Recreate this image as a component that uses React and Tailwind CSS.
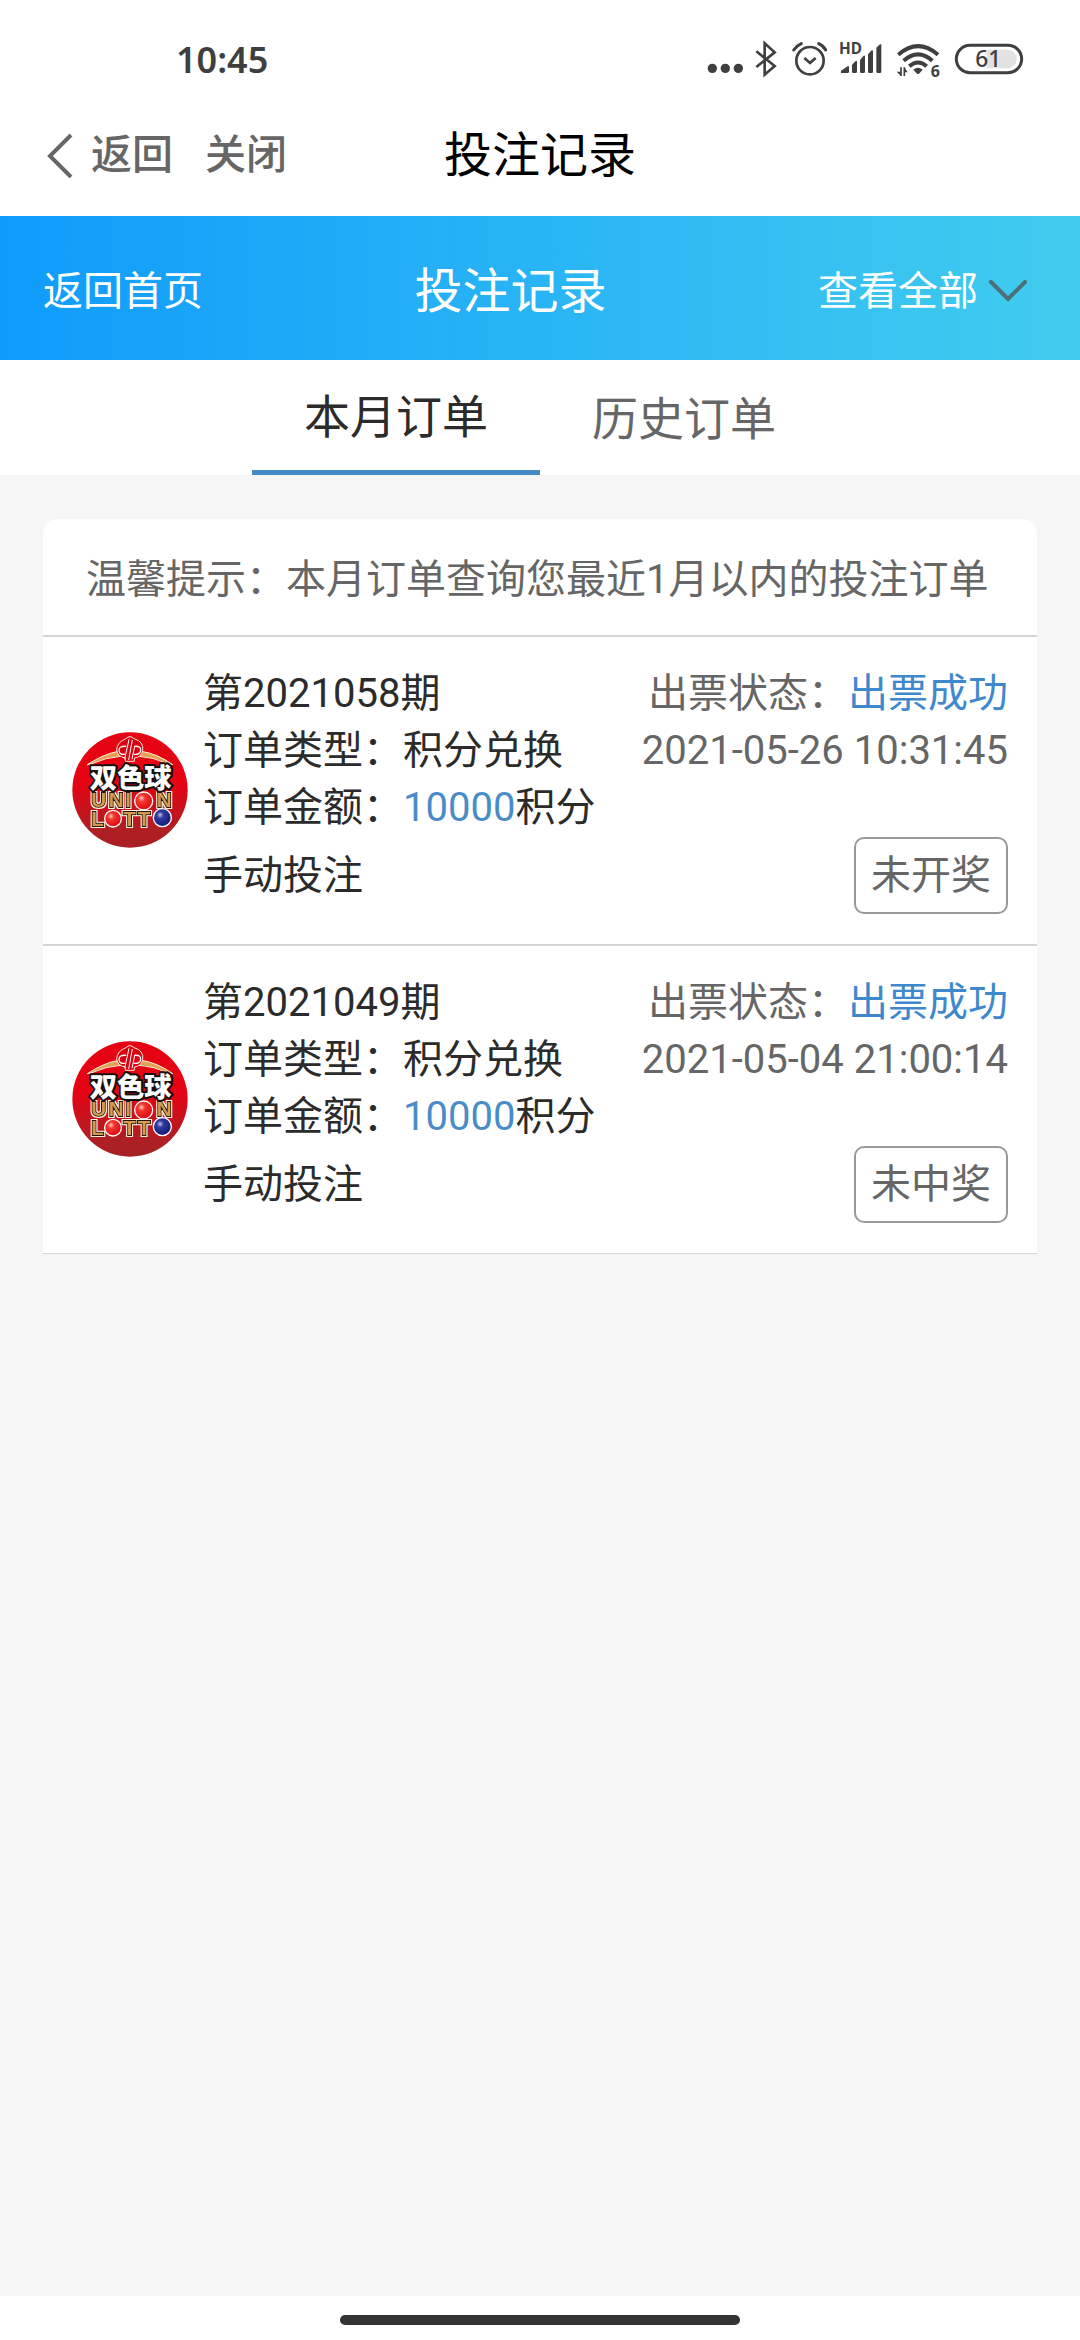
import React from "react";

const orders = [
  { issue: "2021058", type: "积分兑换", amount: "10000", mode: "手动投注", status: "出票成功", time: "2021-05-26 10:31:45", result: "未开奖" },
  { issue: "2021049", type: "积分兑换", amount: "10000", mode: "手动投注", status: "出票成功", time: "2021-05-04 21:00:14", result: "未中奖" },
];

function StatusIcons() {
  return (
    <svg className="h-[60px] w-[350px]" viewBox="0 30 1050 180" fill="none" stroke="#3f3f3f" aria-hidden="true">
      <g fill="#3f3f3f" stroke="none">
        <circle cx="67" cy="145" r="14" />
        <circle cx="106" cy="145" r="14" />
        <circle cx="145" cy="145" r="14" />
      </g>
      <path d="M199 94 L254 138 L224 164 V70 L254 97 L199 141" strokeWidth="8" />
      <circle cx="360" cy="122" r="41" strokeWidth="8" />
      <path d="M343 114 L360 129 L377 114" strokeWidth="8" />
      <path d="M311 90 Q320 77 334 71 M386 71 Q400 77 407 90" strokeWidth="9" strokeLinecap="round" />
      <text x="447" y="102" fontSize="46" fontWeight="700" fontFamily="'Noto Sans', sans-serif" fill="#3f3f3f" stroke="none">HD</text>
      <g fill="#3f3f3f" stroke="none">
        <path d="M453 159 V152 L474 138 Q477 137 477 141 V155 Q477 159 473 159 Z" />
        <path d="M486 155 V134 L497 123 Q501 121 501 126 V155 Q501 159 497 159 H490 Q486 159 486 155 Z" />
        <path d="M510 155 V120 L521 107 Q525 105 525 110 V155 Q525 159 521 159 H514 Q510 159 510 155 Z" />
        <path d="M534 155 V103 L545 91 Q549 89 549 94 V155 Q549 159 545 159 H538 Q534 159 534 155 Z" />
        <path d="M559 155 V83 L570 73 Q574 71 574 76 V155 Q574 159 570 159 H563 Q559 159 559 155 Z" />
      </g>
      <g strokeWidth="12">
        <path d="M625 104 Q684 53 744 104" />
        <path d="M641 122 Q684 84 727 122" />
        <path d="M658 139 Q684 116 710 139" />
      </g>
      <path d="M670 149 Q684 138 698 149 L687 161 Q684 163 681 161 Z" fill="#3f3f3f" stroke="none" />
      <path d="M633 142 V168 M643 142 V168" strokeWidth="5" />
      <path d="M620 155 H633 V168 Z M643 142 L653 157 H643 Z" fill="#3f3f3f" stroke="none" />
      <text x="722" y="170" fontSize="48" fontWeight="700" fontFamily="'Noto Sans', sans-serif" fill="#3f3f3f" stroke="none">6</text>
      <path d="M890 89 H952 A28 28 0 0 1 952 145 H890 Z" fill="#e2e2e2" stroke="none" />
      <rect x="799" y="76" width="196" height="82" rx="41" strokeWidth="9" />
      <text x="856" y="142" fontSize="68" fontWeight="500" fontFamily="'Noto Sans', sans-serif" fill="#3f3f3f" stroke="none">61</text>
    </svg>
  );
}

function LotteryLogo() {
  return (
    <svg className="size-[116px] shrink-0" viewBox="34 36 348 348" role="img" aria-label="双色球">
      <defs>
        <linearGradient id="disc" x1="0" y1="0" x2="0" y2="1">
          <stop offset="0.45" stopColor="#e50314" />
          <stop offset="0.85" stopColor="#ae1f23" />
          <stop offset="1" stopColor="#a82024" />
        </linearGradient>
        <radialGradient id="red" cx="0.38" cy="0.35" r="0.65">
          <stop offset="0" stopColor="#ffc9bd" />
          <stop offset="0.3" stopColor="#f0392f" />
          <stop offset="1" stopColor="#e20613" />
        </radialGradient>
        <radialGradient id="blue" cx="0.38" cy="0.35" r="0.65">
          <stop offset="0" stopColor="#b9bfe8" />
          <stop offset="0.3" stopColor="#2f3a9c" />
          <stop offset="1" stopColor="#141b78" />
        </radialGradient>
        <filter id="outline" x="-10%" y="-10%" width="120%" height="120%">
          <feMorphology in="SourceAlpha" operator="dilate" radius="3" result="grown" />
          <feFlood floodColor="#fff3df" />
          <feComposite in2="grown" operator="in" result="edge" />
          <feMerge>
            <feMergeNode in="edge" />
            <feMergeNode in="SourceGraphic" />
          </feMerge>
        </filter>
      </defs>
      <circle cx="208" cy="210" r="173" fill="url(#disc)" />
      <path d="M80 134 Q130 101 174 94 H242 Q290 101 336 134 L322 131 Q276 111 236 109 H180 Q136 112 94 131 Z" fill="#e6a04f" stroke="#fff0d8" strokeWidth="3" />
      <path d="M196 56 Q208 44 220 56 Q250 64 246 92 Q242 112 221 114 V124 H194 V114 Q170 110 168 90 Q169 66 196 56 Z" fill="#d9000f" stroke="#ffe9d8" strokeWidth="3" />
      <g fill="none" stroke="#fff" strokeWidth="4">
        <path d="M197 79 Q175 77 175 91 Q175 105 193 103" />
        <path d="M221 79 Q241 77 240 91 Q239 105 219 103" />
        <path d="M192 118 L205 58 M204 120 L215 60 M214 118 L222 79" strokeWidth="3" />
      </g>
      <g fontFamily="'Liberation Sans', sans-serif" fontWeight="700" fontSize="62" paintOrder="stroke" strokeLinejoin="miter" fill="#d59a4e" stroke="#21130c" strokeWidth="6" filter="url(#outline)">
        <text x="92 144 194" y="262">UNI</text>
        <text x="288" y="262">N</text>
        <text x="92" y="317">L</text>
        <text x="188 231" y="317">TT</text>
      </g>
      <text x="87" y="204" fontFamily="'Noto Sans CJK SC', sans-serif" fontWeight="900" fontSize="82" paintOrder="stroke" strokeLinejoin="round" fill="#fff" stroke="#16100e" strokeWidth="12">双色球</text>
      <g stroke="#fff" strokeWidth="4">
        <circle cx="249" cy="243" r="27" fill="url(#red)" />
        <circle cx="157" cy="296" r="25" fill="url(#red)" />
        <circle cx="305" cy="293" r="27" fill="url(#blue)" />
      </g>
    </svg>
  );
}

function OrderRow({ order }) {
  return (
    <li className="flex items-center gap-[15px] border-b-2 border-[#d6d6d6] bg-white px-[29px] pt-7 pb-[30px] leading-[57px] last:border-b">
      <LotteryLogo />
      <div className="flex flex-1 flex-col gap-px">
        <div className="flex justify-between">
          <div className="text-[#2b2b2b]">
            <p>第{order.issue}期</p>
            <p>订单类型：{order.type}</p>
            <p>订单金额：<span className="text-[#4a8cc8]">{order.amount}</span>积分</p>
          </div>
          <div className="text-right text-[#666666]">
            <p>出票状态：<span className="text-[#4088cc]">{order.status}</span></p>
            <time>{order.time}</time>
          </div>
        </div>
        <div className="flex items-center justify-between">
          <p className="text-[#2b2b2b]">{order.mode}</p>
          <button className="h-[77px] rounded-[10px] border-2 border-[#999999] px-[15px] text-[#666666]">{order.result}</button>
        </div>
      </div>
    </li>
  );
}

export default function App() {
  return (
    <div className="flex min-h-screen flex-col bg-[#f6f6f6] font-[Roboto,'Noto_Sans_CJK_SC',sans-serif] text-[40px]">
      <div className="flex h-24 items-center justify-between bg-white pt-6 pr-10 pl-44">
        <span className="font-['Noto_Sans',sans-serif] text-[36px] font-semibold text-[#3f3f3f]">10:45</span>
        <StatusIcons />
      </div>

      <header className="grid h-[120px] grid-cols-[1fr_auto_1fr] items-center bg-white px-[46px]">
        <div className="flex items-center gap-8 text-[41px] font-medium text-[#666666]">
          <button className="flex items-center gap-[18px]">
            <svg className="h-[44px] w-[27px]" viewBox="0 0 27 44" fill="none" stroke="#666666" strokeWidth="4" aria-hidden="true">
              <path d="M25 1 L4 22 L25 43" />
            </svg>
            返回
          </button>
          <button>关闭</button>
        </div>
        <h1 className="text-[48px] text-black">投注记录</h1>
      </header>

      <nav className="flex h-36 items-center justify-between bg-linear-to-r from-[#0f9bfb] to-[#41ccee] pt-2 pr-[52px] pl-[43px] text-white">
        <a href="#home">返回首页</a>
        <h2 className="text-[48px]">投注记录</h2>
        <button className="flex items-center gap-[10px]">
          查看全部
          <svg className="h-[24px] w-[40px]" viewBox="0 0 40 24" fill="none" stroke="#4d7078" strokeWidth="4" aria-hidden="true">
            <path d="M3 2 L20 19 L37 2" strokeLinecap="round" />
          </svg>
        </button>
      </nav>

      <div role="tablist" className="flex h-[115px] justify-center bg-white text-[46px]">
        <button role="tab" aria-selected="true" className="w-72 border-b-[5px] border-[#448ac6] pt-1 text-[#2b2b2b]">本月订单</button>
        <button role="tab" aria-selected="false" className="w-72 pt-1 text-[#666666]">历史订单</button>
      </div>

      <main className="flex-1 px-[43px] pt-11">
        <section className="overflow-hidden rounded-t-[14px] bg-white">
          <p className="border-b-2 border-[#d6d6d6] px-[43px] pt-[31px] pb-[25px] leading-[60px] text-[#666666]">
            温馨提示：本月订单查询您最近1月以内的投注订单
          </p>
          <ul>
            {orders.map((order) => (
              <OrderRow key={order.issue} order={order} />
            ))}
          </ul>
        </section>
      </main>

      <footer className="flex h-11 items-center justify-center bg-white pt-[4px]">
        <div className="h-[10px] w-[400px] rounded-full bg-[#333333]" />
      </footer>
    </div>
  );
}
